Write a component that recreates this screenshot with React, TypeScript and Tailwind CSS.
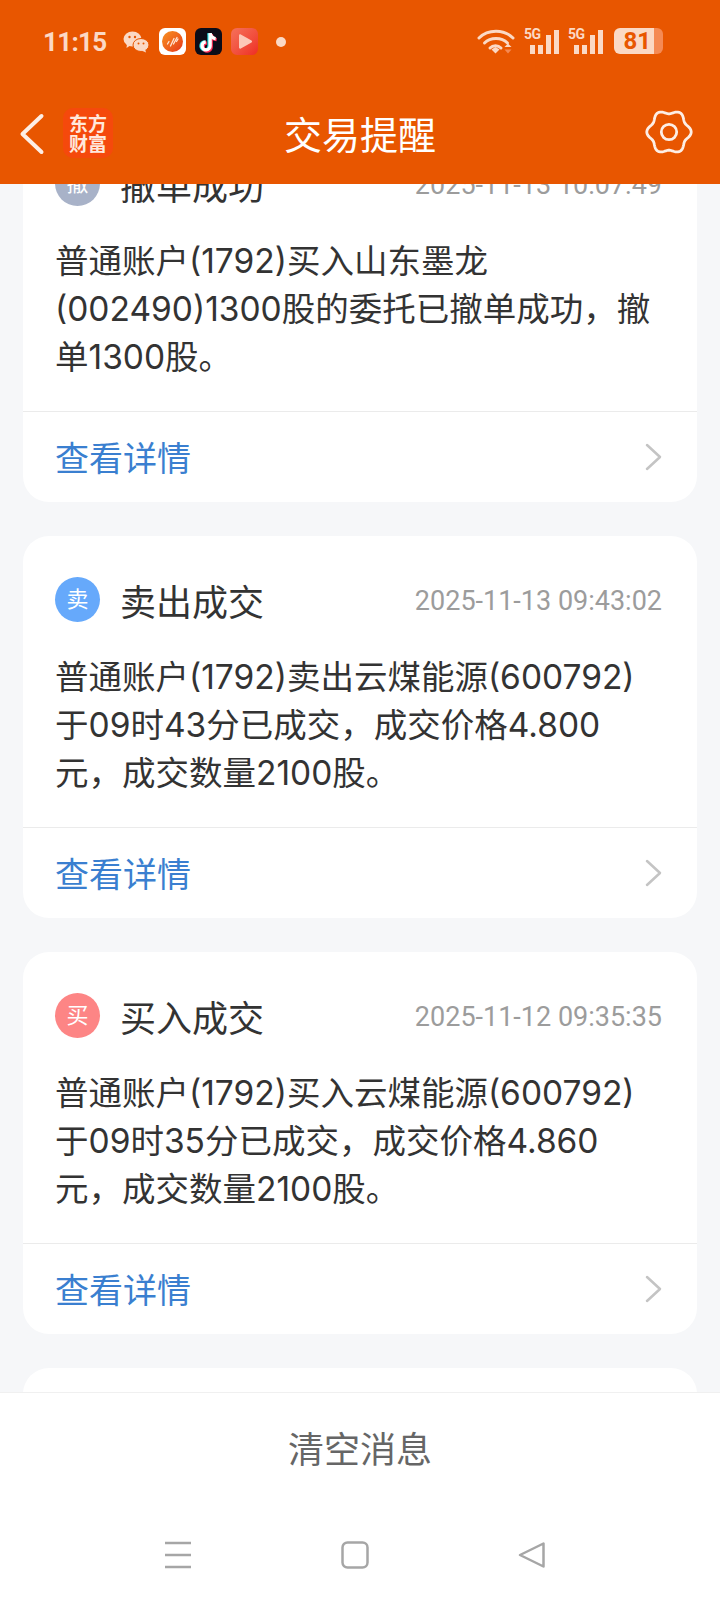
const fontStack = { fontFamily: 'Roboto, "Noto Sans CJK SC", sans-serif' };
const bodyFont = { fontFamily: 'Inter, "Noto Sans CJK SC", sans-serif' };

const messages = [
  {
    badge: '撤',
    badgeColor: 'bg-[#a8b2c8]',
    title: '撤单成功',
    time: '2025-11-13 10:07:49',
    lines: ['普通账户(1792)买入山东墨龙', '(002490)1300股的委托已撤单成功，撤', '单1300股。'],
  },
  {
    badge: '卖',
    badgeColor: 'bg-[#66a9fb]',
    title: '卖出成交',
    time: '2025-11-13 09:43:02',
    lines: ['普通账户(1792)卖出云煤能源(600792)', '于09时43分已成交，成交价格4.800', '元，成交数量2100股。'],
  },
  {
    badge: '买',
    badgeColor: 'bg-[#fd8585]',
    title: '买入成交',
    time: '2025-11-12 09:35:35',
    lines: ['普通账户(1792)买入云煤能源(600792)', '于09时35分已成交，成交价格4.860', '元，成交数量2100股。'],
  },
];

// wavy six-lobed outline of the settings gear
function gearPath() {
  const points: string[] = [];
  for (let i = 0; i < 120; i++) {
    const angle = (i / 120) * Math.PI * 2;
    const radius = 20.2 + 2 * Math.cos(6 * angle);
    const x = 25 + radius * Math.cos(angle);
    const y = 24 + radius * Math.sin(angle);
    points.push(`${x.toFixed(2)} ${y.toFixed(2)}`);
  }
  return `M${points.join('L')}Z`;
}

function WifiIcon() {
  return (
    <svg width="38" height="26" viewBox="0 0 38 26" fill="none">
      <path d="M2 10C11 1 27 1 36 10" stroke="#fbd9c5" strokeWidth="3" strokeLinecap="round" />
      <path d="M7.500 15C13.500 9 24.500 9 30.500 15" stroke="#fbd9c5" strokeWidth="3" strokeLinecap="round" />
      <path d="M13 20C16 17 21 17 24 20" stroke="#fbd9c5" strokeWidth="3" strokeLinecap="round" />
      <path d="M14.500 21.500L18.500 19L22.500 21.500L18.500 25.500Z" fill="#fbd9c5" />
      <path d="M31 15.500L34.500 19H27.500Z" fill="#fbd9c5" />
      <path d="M31 25.500L34.500 21.500H27.500Z" fill="#f58a54" />
    </svg>
  );
}

function SignalIcon() {
  return (
    <div className="relative w-[35px] h-[26px]">
      <span className="absolute left-0 top-[-1px] text-[14px] leading-[14px] font-bold text-[#fbd9c5] tracking-[-0.5px]">5G</span>
      <div className="absolute right-0 bottom-0 flex items-end gap-[3px]">
        <div className="w-[5px] h-[9px] bg-[#fbd9c5]" />
        <div className="w-[5px] h-[9px] bg-[#fbd9c5]" />
        <div className="w-[5px] h-[19px] bg-[#fbd9c5]" />
        <div className="w-[5px] h-[24px] bg-[#fbd9c5]" />
      </div>
    </div>
  );
}

function StatusBar() {
  return (
    <div className="h-[83px] pt-[28px] pl-[43px] pr-[57px] flex items-start text-[#fbd9c5]">
      <span className="w-[80px] text-[26px] leading-[26px] font-bold pt-[1px] tracking-[-0.7px]">11:15</span>
      {/* notification icons */}
      <svg width="26" height="22" viewBox="0 0 26 22" className="mt-[3px]">
        <ellipse cx="9.500" cy="8" rx="9" ry="7.500" fill="#fbd9c5" />
        <path d="M4 13L3.500 17L8 14Z" fill="#fbd9c5" />
        <ellipse cx="18" cy="14" rx="8" ry="6.500" fill="#fbd9c5" stroke="#e85600" strokeWidth="1" />
        <path d="M22 18L23 21.500L18.500 19.500Z" fill="#fbd9c5" />
        <circle cx="6.500" cy="6" r="1.200" fill="#e85600" />
        <circle cx="12" cy="6" r="1.200" fill="#e85600" />
        <circle cx="15.500" cy="12.500" r="1" fill="#e85600" />
        <circle cx="20.500" cy="12.500" r="1" fill="#e85600" />
      </svg>
      <div className="ml-[10px] w-[27px] h-[27px] rounded-[6px] bg-white flex items-center justify-center">
        <div className="w-[21px] h-[21px] rounded-full bg-gradient-to-br from-[#f79020] to-[#e5301a] flex items-center justify-center">
          <svg width="14" height="11" viewBox="0 0 14 11">
            <path d="M1.500 8L3 5.500M4.500 10L8 2.500M7.500 8L11 1.500M10.500 5.500L12 3" stroke="#ffe6d6" strokeWidth="1.300" strokeLinecap="round" />
          </svg>
        </div>
      </div>
      <div className="ml-[9px] w-[27px] h-[27px] rounded-[6px] bg-[#0c0c18] flex items-center justify-center">
        <svg width="21" height="23" viewBox="0 0 19 21" fill="none">
          <path d="M11 3V14.500A3.700 3.700 0 1 1 7 10.800" stroke="#2ae4e8" strokeWidth="3" transform="translate(-1 0)" />
          <path d="M11 3C11.500 6 13.500 7.500 16 7.800" stroke="#2ae4e8" strokeWidth="3" transform="translate(-1 0)" />
          <path d="M11 3V14.500A3.700 3.700 0 1 1 7 10.800" stroke="#fe2c55" strokeWidth="3" transform="translate(1 1)" />
          <path d="M11 3C11.500 6 13.500 7.500 16 7.800" stroke="#fe2c55" strokeWidth="3" transform="translate(1 1)" />
          <path d="M11 3V14.500A3.700 3.700 0 1 1 7 10.800" stroke="#fff" strokeWidth="3" />
          <path d="M11 3C11.500 6 13.500 7.500 16 7.800" stroke="#fff" strokeWidth="3" />
        </svg>
      </div>
      <div className="ml-[9px] w-[27px] h-[27px] rounded-[6px] bg-gradient-to-br from-[#f5705a] to-[#ee2a22] flex items-center justify-center">
        <svg width="16" height="17" viewBox="0 0 16 17">
          <path d="M2 2.500C2 1.500 3 1 3.800 1.500L14.500 7.500C15.300 8 15.300 9 14.500 9.500L3.800 15.500C3 16 2 15.500 2 14.500Z" fill="#fcc9b8" />
        </svg>
      </div>
      <div className="ml-[18px] mt-[9px] w-[10px] h-[10px] rounded-full bg-[#fbd9c5]" />
      <div className="ml-auto flex items-start">
        <WifiIcon />
        <div className="ml-[9px]"><SignalIcon /></div>
        <div className="ml-[9px]"><SignalIcon /></div>
        <div className="ml-[11px] flex items-center">
          <div className="w-[40px] h-[26px] rounded-l-[6px] bg-[#fbd9c5] flex items-center justify-end pr-[3px] text-[#e85600] text-[24px] font-bold leading-none">81</div>
          <div className="w-[9px] h-[26px] rounded-r-[6px] bg-[#f58a54]" />
        </div>
      </div>
    </div>
  );
}

function NavBar() {
  return (
    <div className="h-[101px] grid grid-cols-[1fr_auto_1fr] items-start">
      <div className="flex items-start">
        <svg width="26" height="42" viewBox="0 0 26 42" fill="none" className="ml-[19px] mt-[30px]">
          <path d="M22.500 3L3.500 21L22.500 39" stroke="#fdeee5" strokeWidth="4" strokeLinecap="round" strokeLinejoin="round" />
        </svg>
        <div className="ml-[18px] mt-[25px] w-[50px] h-[50px] rounded-[10px] bg-[#f5490c] flex items-center justify-center text-center text-[#ffe8dc] text-[19px] leading-[20px] font-bold" style={{ fontFamily: '"Noto Sans CJK SC", sans-serif' }}>
          <div>东方<br />财富</div>
        </div>
      </div>
      <div className="mt-[30px] text-white text-[38px] leading-[46px]">交易提醒</div>
      <svg width="50" height="48" viewBox="0 0 50 48" fill="none" className="justify-self-end mr-[26px] mt-[25px]">
        <path d={gearPath()} stroke="#fdeee5" strokeWidth="2.800" strokeLinejoin="round" />
        <circle cx="25" cy="24" r="7.700" stroke="#fdeee5" strokeWidth="2.800" />
      </svg>
    </div>
  );
}

function MessageCard({ message }: { message: (typeof messages)[number] }) {
  return (
    <div className="bg-white rounded-[26px] h-[382px]">
      <div className="pt-[41px] pl-[32px] pr-[35px]">
        <div className="flex items-center h-[45px]">
          <div className={`w-[45px] h-[45px] rounded-full ${message.badgeColor} flex items-center justify-center text-white text-[22px]`}>
            {message.badge}
          </div>
          <span className="ml-[20px] text-[36px] leading-[45px] text-[#333333] relative top-[5px]">{message.title}</span>
          <span className="ml-auto text-[27px] leading-[34px] text-[#9c9c9c] relative top-[1px]">{message.time}</span>
        </div>
        <div className="mt-[31px] text-[33.500px] leading-[48px] text-[#333333] whitespace-nowrap" style={bodyFont}>
          {message.lines.map((line) => (
            <div key={line}>{line}</div>
          ))}
        </div>
      </div>
      <div className="mt-[30px] h-[90px] border-t border-[#ebebeb] pl-[32px] pr-[34px] flex items-center justify-between">
        <span className="text-[34px] text-[#3a7fd0] relative top-[3px]">查看详情</span>
        <svg width="18" height="28" viewBox="0 0 18 28" fill="none">
          <path d="M2 2L15 14L2 26" stroke="#c4c4c4" strokeWidth="2.500" strokeLinecap="round" strokeLinejoin="round" />
        </svg>
      </div>
    </div>
  );
}

export default function App() {
  return (
    <div className="w-[720px] h-[1604px] flex flex-col bg-[#f6f7f9] overflow-hidden" style={fontStack}>
      {/* Orange header */}
      <div className="bg-[#e85600] z-10 shrink-0">
        <StatusBar />
        <NavBar />
      </div>

      {/* Scrolled message list */}
      <div className="flex-1 overflow-hidden px-[23px]">
        <div className="-mt-[64px] flex flex-col gap-[34px]">
          {messages.map((message) => (
            <MessageCard key={message.time} message={message} />
          ))}
          <div className="bg-white rounded-[26px] h-[382px]" />
        </div>
      </div>

      {/* Bottom action and system navigation */}
      <div className="h-[212px] bg-white border-t border-[#f0f0f0] shrink-0 z-10 flex flex-col items-center">
        <div className="mt-[34px] h-[48px] text-[36px] leading-[48px] text-[#666666]">清空消息</div>
        <div className="mt-[66px] -ml-[10px] w-[382px] flex items-center justify-between">
          <svg width="28" height="28" viewBox="0 0 28 28">
            <path d="M1 2H27M1 14H27M1 26H27" stroke="#a6a6a6" strokeWidth="2.500" />
          </svg>
          <svg width="28" height="28" viewBox="0 0 28 28" fill="none">
            <rect x="1.500" y="1.500" width="25" height="25" rx="5" stroke="#a6a6a6" strokeWidth="2.500" />
          </svg>
          <svg width="28" height="28" viewBox="0 0 28 28" fill="none">
            <path d="M25.500 2.500V25.500L2 14Z" stroke="#a6a6a6" strokeWidth="2.500" strokeLinejoin="round" />
          </svg>
        </div>
      </div>
    </div>
  );
}
